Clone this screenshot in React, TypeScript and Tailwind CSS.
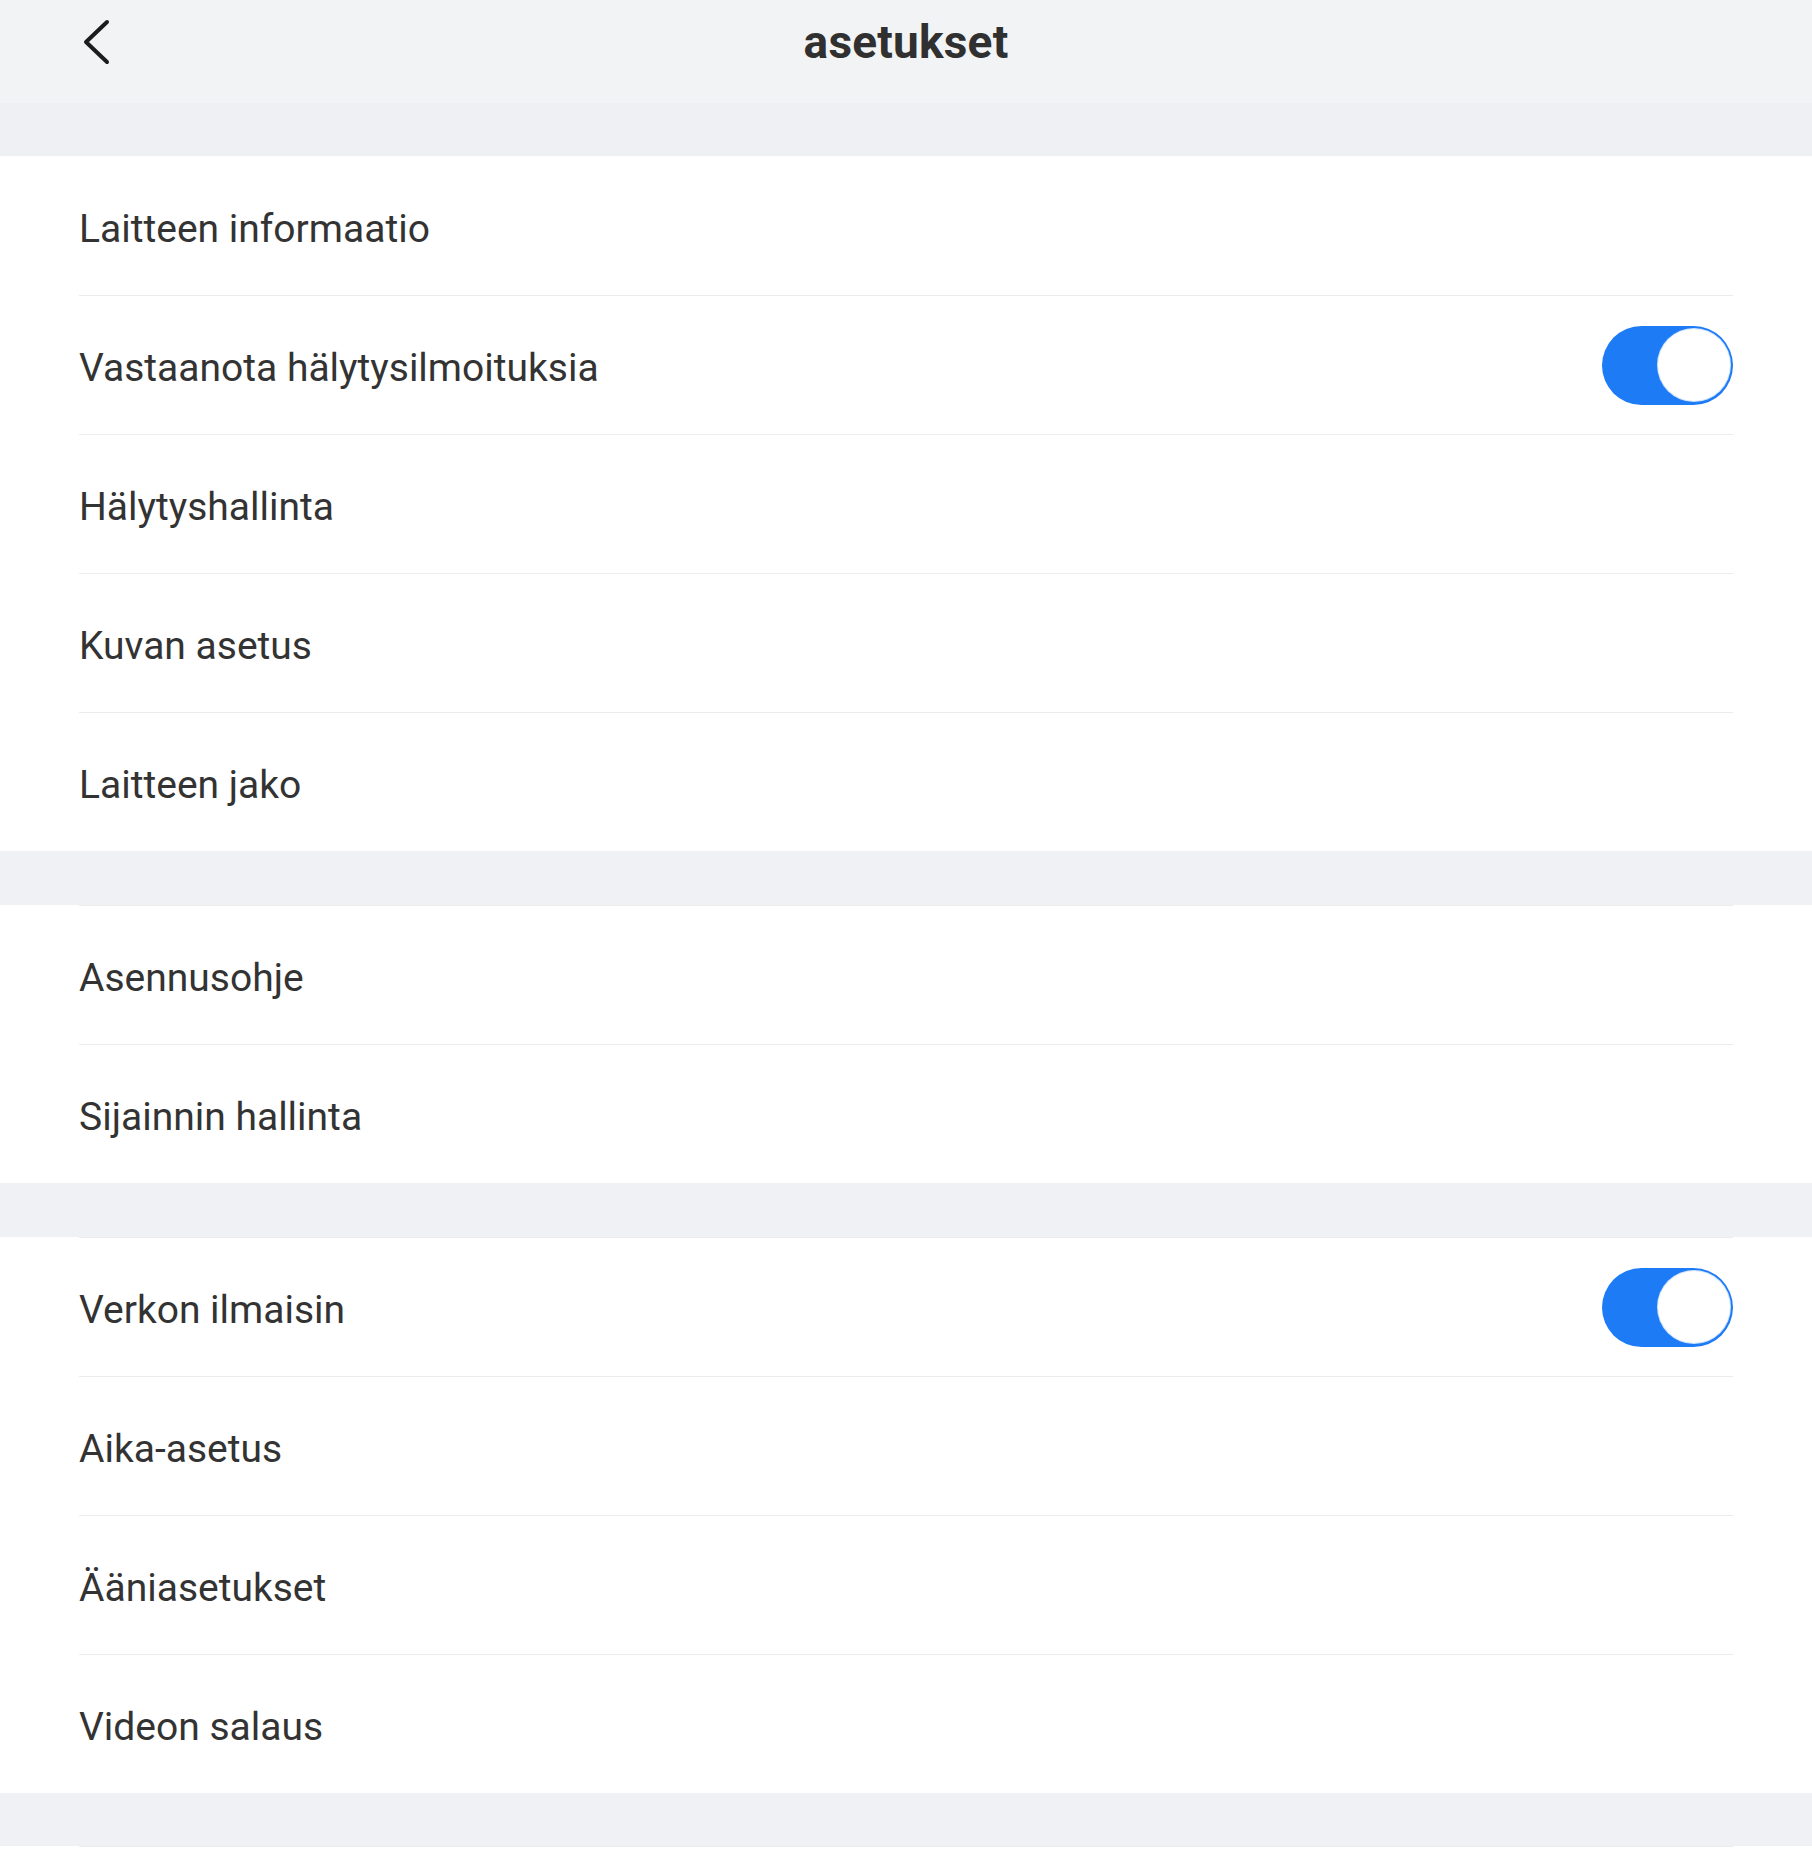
const sections: { label: string; toggle?: boolean }[][] = [
  [
    { label: "Laitteen informaatio" },
    { label: "Vastaanota hälytysilmoituksia", toggle: true },
    { label: "Hälytyshallinta" },
    { label: "Kuvan asetus" },
    { label: "Laitteen jako" },
  ],
  [{ label: "Asennusohje" }, { label: "Sijainnin hallinta" }],
  [
    { label: "Verkon ilmaisin", toggle: true },
    { label: "Aika-asetus" },
    { label: "Ääniasetukset" },
    { label: "Videon salaus" },
  ],
];

function Toggle() {
  return (
    <div className="w-[131px] h-[79px] rounded-full bg-[#1d7bf6] flex items-center justify-end pr-[3px]">
      <div className="w-[72px] h-[72px] rounded-full bg-white ring-1 ring-[#cfe2fc]" />
    </div>
  );
}

export default function App() {
  return (
    <div
      className="h-[1853px] overflow-hidden bg-[#f0f1f5] text-[#333333]"
      style={{ fontFamily: "Roboto, 'Noto Sans', sans-serif" }}
    >
      {/* Header */}
      <div className="h-[103px] bg-[#f2f3f5] relative flex items-center justify-center pb-[20px]">
        <button className="absolute left-[80px] top-[18px] w-[32px] h-[48px] flex items-center justify-center">
          <svg width="30" height="46" viewBox="0 0 30 46" fill="none">
            <path
              d="M26 3 L5 23 L26 43"
              stroke="#1c1c1e"
              strokeWidth="4"
              strokeLinecap="round"
              strokeLinejoin="round"
            />
          </svg>
        </button>
        <h1 className="text-[46px] font-bold leading-none tracking-[0.2px] text-[#303030]">asetukset</h1>
      </div>
      <div className="h-[53px] bg-[#eff0f4]" />

      {sections.map((rows, si) => (
        <div key={si} className={si > 0 ? "mt-[54px]" : ""}>
          <div className="bg-white px-[79px]">
            {rows.map((row, ri) => (
              <div
                key={row.label}
                className={`h-[139px] flex items-center justify-between ${
                  si === 0 && ri === 0 ? "" : "border-t border-[#ececec]"
                }`}
              >
                <span className="text-[39px] leading-none pt-[7px]">{row.label}</span>
                {row.toggle && <Toggle />}
              </div>
            ))}
          </div>
        </div>
      ))}

      {/* next section begins below the fold */}
      <div className="mt-[53px] bg-white px-[79px]">
        <div className="h-[139px] border-t border-[#ececec]" />
      </div>
    </div>
  );
}
